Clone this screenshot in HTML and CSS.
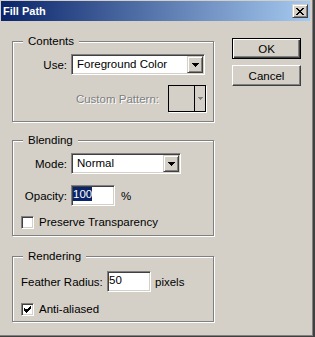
FILE: index.html
```html
<!DOCTYPE html>
<html lang="en">
<head>
    <meta charset="UTF-8">
    <title>Fill Path</title>
    <link rel="stylesheet" href="styles.css">
</head>
<body>
    <div class="window">
        <!-- Title bar -->
        <div class="titlebar">
            <span class="title">Fill Path</span>
            <span class="close-btn">
                <svg width="8" height="7" viewBox="0 0 8 7" shape-rendering="crispEdges"><path fill="#000" d="M0 0h2v1H0z M6 0h2v1H6z M1 1h2v1H1z M5 1h2v1H5z M2 2h4v1H2z M3 3h2v1H3z M2 4h4v1H2z M1 5h2v1H1z M5 5h2v1H5z M0 6h2v1H0z M6 6h2v1H6z"/></svg>
            </span>
        </div>

        <div class="body">
            <div class="groups">
                <!-- Contents -->
                <div class="group group-contents">
                    <div class="group-title">Contents</div>
                    <div class="row row-use">
                        <span class="label">Use:</span>
                        <div class="select select-contents">
                            <span class="select-text">Foreground Color</span>
                            <span class="select-arrow">
                                <svg width="7" height="4" viewBox="0 0 7 4" shape-rendering="crispEdges"><path fill="#000" d="M0 0h7v1H0z M1 1h5v1H1z M2 2h3v1H2z M3 3h1v1H3z"/></svg>
                            </span>
                        </div>
                    </div>
                    <div class="row row-pattern">
                        <span class="label-disabled">Custom Pattern:</span>
                        <div class="pattern">
                            <span class="pattern-swatch"></span>
                            <span class="pattern-arrow">
                                <svg width="5" height="3" viewBox="0 0 5 3" shape-rendering="crispEdges"><path fill="#808080" d="M0 0h5v1H0z M1 1h3v1H1z M2 2h1v1H2z"/></svg>
                            </span>
                        </div>
                    </div>
                </div>

                <!-- Blending -->
                <div class="group group-blending">
                    <div class="group-title">Blending</div>
                    <div class="row row-mode">
                        <span class="label">Mode:</span>
                        <div class="select select-mode">
                            <span class="select-text">Normal</span>
                            <span class="select-arrow">
                                <svg width="7" height="4" viewBox="0 0 7 4" shape-rendering="crispEdges"><path fill="#000" d="M0 0h7v1H0z M1 1h5v1H1z M2 2h3v1H2z M3 3h1v1H3z"/></svg>
                            </span>
                        </div>
                    </div>
                    <div class="row row-opacity">
                        <span class="label">Opacity:</span>
                        <div class="field"><span class="field-text selected">100</span></div>
                        <span class="unit">%</span>
                    </div>
                    <div class="row row-check">
                        <span class="checkbox"></span>
                        <span class="check-label">Preserve Transparency</span>
                    </div>
                </div>

                <!-- Rendering -->
                <div class="group group-rendering">
                    <div class="group-title">Rendering</div>
                    <div class="row row-feather">
                        <span class="label-left">Feather Radius:</span>
                        <div class="field"><span class="field-text">50</span></div>
                        <span class="unit unit-pixels">pixels</span>
                    </div>
                    <div class="row row-check row-check-aa">
                        <span class="checkbox">
                            <svg width="9" height="9" viewBox="0 0 9 9" shape-rendering="crispEdges"><path fill="#000" d="M7 1h1v1H7z M6 2h2v1H6z M1 3h1v1H1z M5 3h3v1H5z M1 4h6v1H1z M1 5h5v1H1z M2 6h3v1H2z M3 7h1v1H3z"/></svg>
                        </span>
                        <span class="check-label">Anti-aliased</span>
                    </div>
                </div>
            </div>

            <div class="buttons">
                <div class="btn btn-default">OK</div>
                <div class="btn">Cancel</div>
            </div>
        </div>
    </div>
</body>
</html>
```

FILE: styles.css
```css
body {
    margin: 0;
    font-family: "Liberation Sans", Arial, sans-serif;
    font-size: 11.5px;
    color: #000;
}
.window {
    width: 315px;
    height: 337px;
    box-sizing: border-box;
    background: #d4d0c8;
    padding: 1px 3px 0 1px;
    border-right: 2px solid #404040;
    border-bottom: 1px solid #404040;
    box-shadow: inset -1px -1px #808080;
}

/* title bar */
.titlebar {
    height: 20px;
    display: flex;
    align-items: center;
    justify-content: space-between;
    padding: 0 2px;
    background: linear-gradient(to right, #0a246a, #a6caf0);
}
.title {
    color: #fff;
    font-weight: bold;
    font-size: 11px;
    line-height: 13px;
    padding-top: 1px;
}
.close-btn {
    width: 16px;
    height: 14px;
    box-sizing: border-box;
    display: flex;
    align-items: center;
    justify-content: center;
    background: #d4d0c8;
    border: 1px solid;
    border-color: #d4d0c8 #404040 #404040 #d4d0c8;
    box-shadow: inset 1px 1px #fff, inset -1px -1px #808080;
}
.close-btn svg {
    display: block;
}

/* layout */
.body {
    display: flex;
    align-items: flex-start;
    padding: 17px 0 0 11px;
}
.groups {
    width: 202px;
    padding-top: 3px;
}
.buttons {
    margin-left: 18px;
    display: flex;
    flex-direction: column;
    gap: 6px;
}

/* group boxes */
.group {
    border: 1px solid #808080;
    box-shadow: inset 1px 1px #fff, 1px 1px #fff;
    padding: 0 7px 0 8px;
}
.group-contents {
    padding-bottom: 9px;
}
.group-blending {
    margin-top: 18px;
    padding-bottom: 6px;
}
.group-rendering {
    margin-top: 20px;
    padding-bottom: 5px;
}
.group-title {
    width: fit-content;
    margin: -7px 0 0 2px;
    padding: 0 5px;
    background: #d4d0c8;
    line-height: 13px;
    white-space: nowrap;
}

/* rows */
.row {
    display: flex;
    align-items: center;
    white-space: nowrap;
}
.row-use { margin-top: 6px; }
.row-pattern { margin-top: 10px; justify-content: flex-end; }
.row-mode { margin-top: 6px; }
.row-opacity { margin-top: 11px; }
.row-check { margin-top: 10px; }
.row-feather { margin-top: 8px; }
.row-check-aa { margin-top: 11px; }

.label {
    width: 46px;
    margin-right: 4px;
    text-align: right;
}
.label-left {
    width: 86px;
}
.label-disabled {
    margin-right: 9px;
    color: #808080;
    text-shadow: 1px 1px #fff;
}
.unit {
    margin-left: 6px;
}
.unit-pixels {
    margin-left: 4px;
}

/* combo boxes */
.select {
    height: 21px;
    box-sizing: border-box;
    display: flex;
    padding: 1px;
    background: #fff;
    border: 1px solid;
    border-color: #808080 #fff #fff #808080;
    box-shadow: inset 1px 1px #404040, inset -1px -1px #d4d0c8;
}
.select-contents { width: 134px; }
.select-mode { width: 110px; }
.select-text {
    flex: 1;
    padding-left: 4px;
    line-height: 17px;
}
.select-arrow {
    width: 16px;
    box-sizing: border-box;
    display: flex;
    align-items: center;
    justify-content: center;
    background: #d4d0c8;
    border: 1px solid;
    border-color: #d4d0c8 #404040 #404040 #d4d0c8;
    box-shadow: inset 1px 1px #fff, inset -1px -1px #808080;
}
.select-arrow svg { display: block; }

/* pattern picker (disabled) */
.pattern {
    width: 38px;
    height: 27px;
    box-sizing: border-box;
    display: flex;
    border: 1px solid #000;
    box-shadow: 1px 1px #fff;
}
.pattern-swatch {
    flex: 1;
    border-right: 1px solid #000;
}
.pattern-arrow {
    width: 10px;
    display: flex;
    align-items: center;
    justify-content: center;
}
.pattern-arrow svg { display: block; }

/* text fields */
.field {
    width: 44px;
    height: 21px;
    box-sizing: border-box;
    padding: 1px;
    background: #fff;
    border: 1px solid;
    border-color: #808080 #fff #fff #808080;
    box-shadow: inset 1px 1px #404040, inset -1px -1px #d4d0c8;
}
.field-text {
    display: inline-block;
    line-height: 13px;
    padding-top: 1px;
}
.selected {
    background: #0a246a;
    color: #fff;
    padding: 1px 0 0;
}

/* check boxes */
.checkbox {
    width: 13px;
    height: 13px;
    box-sizing: border-box;
    padding: 1px;
    background: #fff;
    border: 1px solid;
    border-color: #808080 #fff #fff #808080;
    box-shadow: inset 1px 1px #404040, inset -1px -1px #d4d0c8;
}
.checkbox svg { display: block; }
.check-label {
    margin-left: 5px;
    line-height: 13px;
}

/* push buttons */
.btn {
    width: 69px;
    height: 21px;
    box-sizing: border-box;
    display: flex;
    align-items: center;
    justify-content: center;
    border: 1px solid;
    border-color: #fff #404040 #404040 #fff;
    box-shadow: inset -1px -1px #808080;
}
.btn-default {
    border-color: #000;
    box-shadow: inset 1px 1px #fff, inset -1px -1px #404040, inset -2px -2px #808080;
}
```
